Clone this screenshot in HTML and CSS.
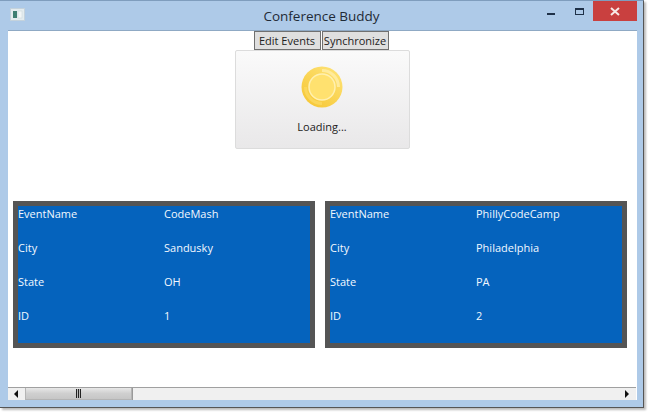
FILE: index.html
```html
<!DOCTYPE html>
<html lang="en">
<head>
    <meta charset="UTF-8">
    <meta name="viewport" content="width=device-width, initial-scale=1.0">
    <title>Conference Buddy</title>
    <link rel="stylesheet" href="styles.css">
</head>
<body>
    <div class="window">
        <div class="titlebar">
            <svg class="app-icon" width="15" height="13" viewBox="0 0 15 13">
                <rect x="0.5" y="0.5" width="14" height="12" fill="#e4ecef" stroke="#c4d2dc"/>
                <rect x="3" y="3" width="4" height="7" fill="#3f7f72"/>
                <rect x="8" y="3" width="4" height="7" fill="#f2f6f6" stroke="#c5d3d8" stroke-width="0.5"/>
            </svg>
            <div class="title">Conference Buddy</div>
            <div class="controls">
                <div class="ctl"><span class="min-glyph"></span></div>
                <div class="ctl"><span class="max-glyph"></span></div>
                <div class="close">
                    <svg width="10" height="9" viewBox="0 0 10 9"><path d="M1 1 L9 8 M9 1 L1 8" stroke="#f7e9e6" stroke-width="2"/></svg>
                </div>
            </div>
        </div>
        <div class="client">
            <div class="toolbar">
                <button class="tool-btn">Edit Events</button>
                <button class="tool-btn">Synchronize</button>
            </div>
            <div class="loading-card">
                <svg class="spinner" width="42" height="42" viewBox="0 0 42 42">
                    <defs>
                        <linearGradient id="disc" x1="0.8" y1="0.1" x2="0.2" y2="0.9">
                            <stop offset="0%" stop-color="#fde070"/>
                            <stop offset="100%" stop-color="#f7c93a"/>
                        </linearGradient>
                    </defs>
                    <circle cx="21" cy="21" r="20.5" fill="url(#disc)"/>
                    <path d="M21 4.5 A16.5 16.5 0 0 1 37.5 21" fill="none" stroke="#ffeb9c" stroke-width="3"/>
                    <path d="M21 37.5 A16.5 16.5 0 0 1 4.5 21" fill="none" stroke="#fbd75a" stroke-width="3"/>
                    <circle cx="21" cy="21" r="13" fill="#ffe16f" stroke="#fff0b0" stroke-width="1.5"/>
                </svg>
                <div class="loading-text">Loading...</div>
            </div>
            <div class="panels">
                <div class="event-panel">
                    <div class="row"><span class="key">EventName</span><span>CodeMash</span></div>
                    <div class="row"><span class="key">City</span><span>Sandusky</span></div>
                    <div class="row"><span class="key">State</span><span>OH</span></div>
                    <div class="row"><span class="key">ID</span><span>1</span></div>
                </div>
                <div class="event-panel">
                    <div class="row"><span class="key">EventName</span><span>PhillyCodeCamp</span></div>
                    <div class="row"><span class="key">City</span><span>Philadelphia</span></div>
                    <div class="row"><span class="key">State</span><span>PA</span></div>
                    <div class="row"><span class="key">ID</span><span>2</span></div>
                </div>
            </div>
            <div class="scrollbar">
                <div class="arrow-left"></div>
                <div class="thumb"><span class="grip"></span></div>
                <div class="track"></div>
                <div class="arrow-right"></div>
            </div>
        </div>
    </div>
</body>
</html>
```

FILE: styles.css
```css
body {
    margin: 0;
    width: 648px;
    height: 412px;
    overflow: hidden;
    background: #fff;
    font-family: "Open Sans", sans-serif;
    color: #222;
}
.window {
    width: 644px;
    height: 408px;
    box-sizing: border-box;
    padding: 0 6px 7px 8px;
    background: #aecae8;
    border-top: 1px solid #7f9dbd;
    border-right: 1px solid #555;
    border-bottom: 1px solid #555;
    display: flex;
    flex-direction: column;
    box-shadow: 2px 2px 2px #bbb;
}
.titlebar {
    height: 29px;
    flex: none;
    display: flex;
    align-items: center;
    position: relative;
}
.app-icon {
    margin: 0 0 3px 2px;
}
.title {
    position: absolute;
    left: 0;
    right: 2px;
    text-align: center;
    font-size: 13.5px;
    color: #1f2a36;
}
.controls {
    margin-left: auto;
    align-self: flex-start;
    display: flex;
}
.ctl {
    width: 28px;
    height: 20px;
    display: flex;
    align-items: center;
    justify-content: center;
}
.min-glyph {
    width: 8px;
    height: 2px;
    margin-top: 5px;
    background: #1f3148;
}
.max-glyph {
    width: 7px;
    height: 4px;
    border: 1px solid #1f3148;
    border-top-width: 2px;
}
.close {
    width: 44px;
    height: 20px;
    background: #c9403f;
    display: flex;
    align-items: center;
    justify-content: center;
}
.client {
    flex: 1;
    background: #fff;
    display: flex;
    flex-direction: column;
    align-items: stretch;
    border-top: 1px solid #8fa9c4;
    padding-right: 1px;
}
.toolbar {
    display: flex;
    justify-content: center;
    gap: 1px;
    height: 19px;
    margin-right: 2px;
}
.tool-btn {
    height: 19px;
    box-sizing: border-box;
    padding: 0;
    width: 67px;
    font: 11px "Open Sans", sans-serif;
    color: #222;
    background: #dfdfdf;
    border: 1px solid #707070;
    white-space: nowrap;
}
.loading-card {
    width: 175px;
    height: 99px;
    box-sizing: border-box;
    margin: 0 auto;
    border: 1px solid #dcdcdc;
    border-radius: 2px;
    background: linear-gradient(#fafafa, #e9e8e9);
    display: flex;
    flex-direction: column;
    align-items: center;
    padding-top: 15px;
}
.loading-text {
    margin-top: 11px;
    font-size: 11px;
    line-height: 16px;
}
.panels {
    margin: 52px 0 0 5px;
    display: flex;
    gap: 10px;
}
.event-panel {
    width: 302px;
    height: 147px;
    box-sizing: border-box;
    border: 5px solid #555;
    background: #0563bd;
    color: #f2f8ff;
    font-size: 11px;
}
.row {
    height: 34px;
    display: flex;
    line-height: 16px;
}
.key {
    width: 146px;
    flex: none;
}
.scrollbar {
    margin-top: auto;
    height: 13px;
    box-sizing: border-box;
    display: flex;
    align-items: stretch;
    background: #f0f0f0;
    border-top: 1px solid #a0a0a0;
}
.arrow-left {
    width: 17px;
    flex: none;
    position: relative;
}
.arrow-left::after {
    content: "";
    position: absolute;
    left: 6px;
    top: 2px;
    border: 4px solid transparent;
    border-left: 0;
    border-right: 4px solid #111;
}
.thumb {
    width: 105px;
    flex: none;
    background: linear-gradient(#e8e8e8, #cfcfcf 50%, #c6c6c6);
    border: 1px solid #b4b4b4;
    border-top: 0;
    display: flex;
    align-items: center;
    justify-content: center;
}
.grip {
    width: 5px;
    height: 9px;
    background: repeating-linear-gradient(90deg, #222 0 1px, #bbb 1px 2px);
}
.track {
    flex: 1;
    border-left: 1px solid #999;
}
.arrow-right {
    width: 17px;
    flex: none;
    position: relative;
}
.arrow-right::after {
    content: "";
    position: absolute;
    left: 6px;
    top: 2px;
    border: 4px solid transparent;
    border-right: 0;
    border-left: 4px solid #111;
}
```
